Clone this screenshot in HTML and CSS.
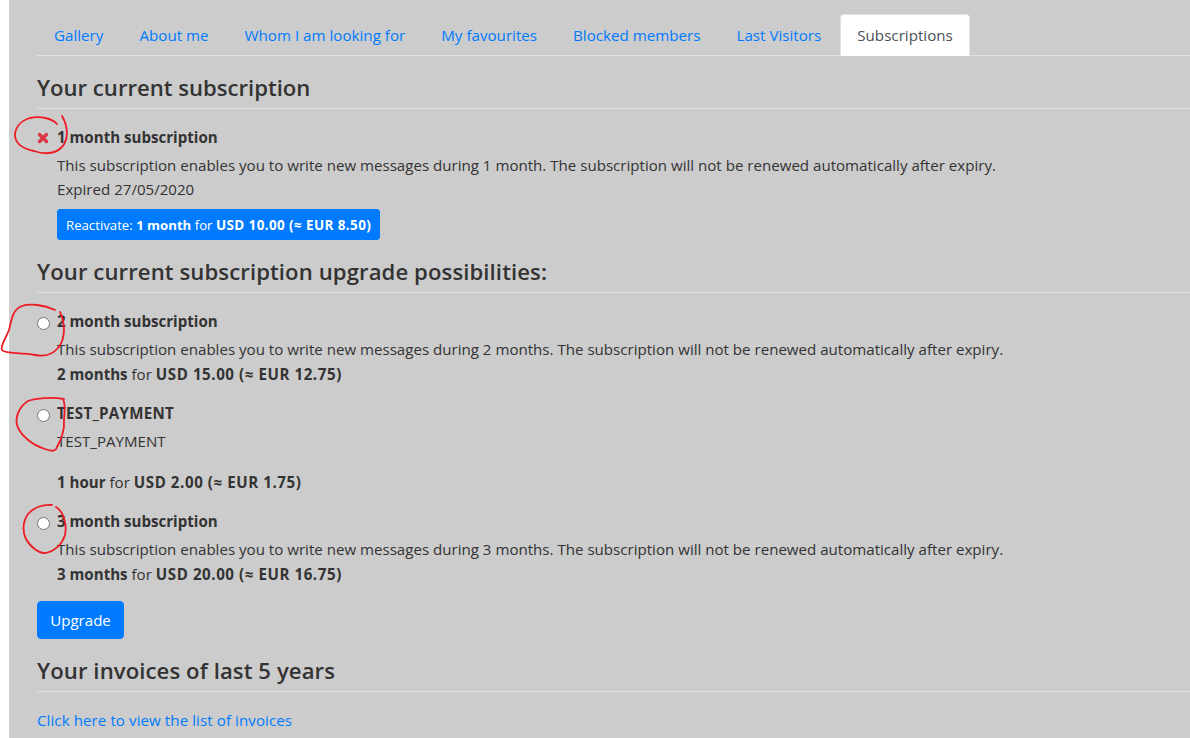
FILE: index.html
```html
<!DOCTYPE html>
<html lang="en">
<head>
<meta charset="utf-8">
<title>Subscriptions</title>
<link rel="stylesheet" href="styles.css">
</head>
<body>
<main class="page">
  <nav class="tabs">
    <a class="tab" href="#">Gallery</a>
    <a class="tab" href="#">About me</a>
    <a class="tab" href="#">Whom I am looking for</a>
    <a class="tab" href="#">My favourites</a>
    <a class="tab" href="#">Blocked members</a>
    <a class="tab" href="#">Last Visitors</a>
    <a class="tab active" href="#">Subscriptions</a>
  </nav>

  <h4 class="heading first">Your current subscription</h4>
  <section class="plan current">
    <div class="title"><svg class="cross" width="12" height="12" viewBox="0 0 12 12"><path d="M2.5 2.5l7 7M9.5 2.5l-7 7" stroke="#dc3545" stroke-width="3.4" stroke-linecap="round"/></svg><b>1 month subscription</b></div>
    <p class="desc">This subscription enables you to write new messages during 1 month. The subscription will not be renewed automatically after expiry.</p>
    <p>Expired 27/05/2020</p>
    <a class="btn btn-sm" href="#">Reactivate: <b class="term">1 month</b> for <b class="amt">USD 10.00 (≈ EUR 8.50)</b></a>
  </section>

  <h4 class="heading second">Your current subscription upgrade possibilities:</h4>
  <section class="plan">
    <div class="title"><input type="radio" name="plan"><b>2 month subscription</b></div>
    <p class="desc">This subscription enables you to write new messages during 2 months. The subscription will not be renewed automatically after expiry.</p>
    <p class="price"><b>2 months</b> for <b class="amt">USD 15.00 (≈ EUR 12.75)</b></p>
  </section>
  <section class="plan">
    <div class="title"><input type="radio" name="plan"><b class="caps">TEST_PAYMENT</b></div>
    <p class="desc spaced">TEST_PAYMENT</p>
    <p class="price"><b>1 hour</b> for <b class="amt">USD 2.00 (≈ EUR 1.75)</b></p>
  </section>
  <section class="plan">
    <div class="title"><input type="radio" name="plan"><b>3 month subscription</b></div>
    <p class="desc">This subscription enables you to write new messages during 3 months. The subscription will not be renewed automatically after expiry.</p>
    <p class="price"><b>3 months</b> for <b class="amt">USD 20.00 (≈ EUR 16.75)</b></p>
  </section>
  <button class="btn btn-lg" type="button">Upgrade</button>

  <h4 class="heading third">Your invoices of last 5 years</h4>
  <a class="link" href="#">Click here to view the list of invoices</a>
</main>

<svg class="scribble" width="1190" height="738" viewBox="0 0 1190 738" fill="none" stroke="#ee1c25" stroke-width="1.8" stroke-linecap="round" stroke-linejoin="round">
  <path d="M57 124C52 118 40 116 30 118C20 121 15 128 15 136C16 144 24 149 34 151C46 155 56 153 62 147C68 140 69 128 62 116"/>
  <path d="M55 310C44 305 30 303 22 306C14 309 12 316 9 330C5 340 0 346 2 350C5 354 20 352 35 355C45 357 52 355 58 348C65 340 66 325 60 312"/>
  <path d="M64 399C52 397 36 398 28 401C20 406 15 416 17 425C20 435 32 445 45 449C50 451 54 452 56 449C60 442 65 432 64 420C65 410 65 402 63 399"/>
  <path d="M52 505C44 504 34 507 28 514C23 521 22 531 26 539C31 548 40 554 46 553C54 551 62 545 65 535C67 525 64 512 56 507"/>
</svg>
</body>
</html>
```
FILE: styles.css
```css
* { box-sizing: border-box; }
html, body { margin: 0; height: 100%; overflow: hidden; }
body {
  background: #fff;
  padding-left: 9px;
  font-family: "Open Sans", "Noto Sans", sans-serif;
  font-size: 15.1px;
  line-height: 24px;
  color: #333;
}
.page {
  background: #ccc;
  height: 738px;
  padding: 14px 0 0 28px;
  display: flex;
  flex-direction: column;
  align-items: flex-start;
}
.tabs {
  display: flex;
  width: 100%;
  height: 42px;
  border-bottom: 1px solid #dee2e6;
}
.tab {
  padding: 8px 16px;
  height: 42px;
  border: 1px solid transparent;
  border-radius: 4px 4px 0 0;
  color: #007bff;
  text-decoration: none;
  white-space: nowrap;
  margin-right: 2px;
  font-size: 15.16px;
}
.tab.active { background: #fff; color: #495057; border-color: #dee2e6 #dee2e6 #fff; }
.heading {
  margin: 0;
  width: 100%;
  height: 36px;
  padding-bottom: 6px;
  border-bottom: 1px solid #dee2e6;
  font-size: 22.1px;
  line-height: 29px;
  font-weight: 600;
  color: #333;
}
.heading.first { margin-top: 17px; margin-bottom: 16px; }
.heading.second { margin-top: 17px; margin-bottom: 16px; letter-spacing: .1px; }
.heading.third { margin-top: 17px; margin-bottom: 16px; letter-spacing: .1px; }
.plan { margin-bottom: 16px; width: 100%; }
.plan.current { margin-bottom: 0; }
.title { display: flex; align-items: center; height: 24px; }
.title b { font-weight: 700; }
.title .caps { letter-spacing: .3px; }
.title input {
  appearance: none;
  width: 13px;
  height: 13px;
  flex: none;
  margin: 4px 7px 0 0;
  background: #fff;
  border: 1px solid #767676;
  border-radius: 50%;
}
.cross { flex: none; margin: 1px 8px 0 0; }
.plan p { margin: 0; white-space: nowrap; }
.plan .desc { margin-top: 4px; }
.plan .desc.spaced { margin-bottom: 16px; }
.plan .price { height: 24px; padding-top: 1px; }
.price .amt { letter-spacing: .57px; }
.plan > p, .plan > .btn { margin-left: 20px; }
.btn {
  display: inline-block;
  background: #007bff;
  border: 1px solid #007bff;
  color: #fff;
  text-decoration: none;
  font-family: inherit;
}
.btn-sm {
  margin-top: 8px;
  height: 31px;
  padding: 1px 8px 0;
  font-size: 13.2px;
  line-height: 29px;
  white-space: nowrap;
  border-radius: 3px;
}
.btn-sm .term { font-size: 13.2px; }
.btn-sm .amt { font-size: 13.5px; letter-spacing: .38px; }
.btn-lg {
  height: 38px;
  width: 87px;
  padding: 0;
  font-size: 15.1px;
  border-radius: 4px;
}
.link { color: #007bff; text-decoration: none; letter-spacing: .08px; }
.scribble { position: absolute; left: 0; top: 0; pointer-events: none; }
```
